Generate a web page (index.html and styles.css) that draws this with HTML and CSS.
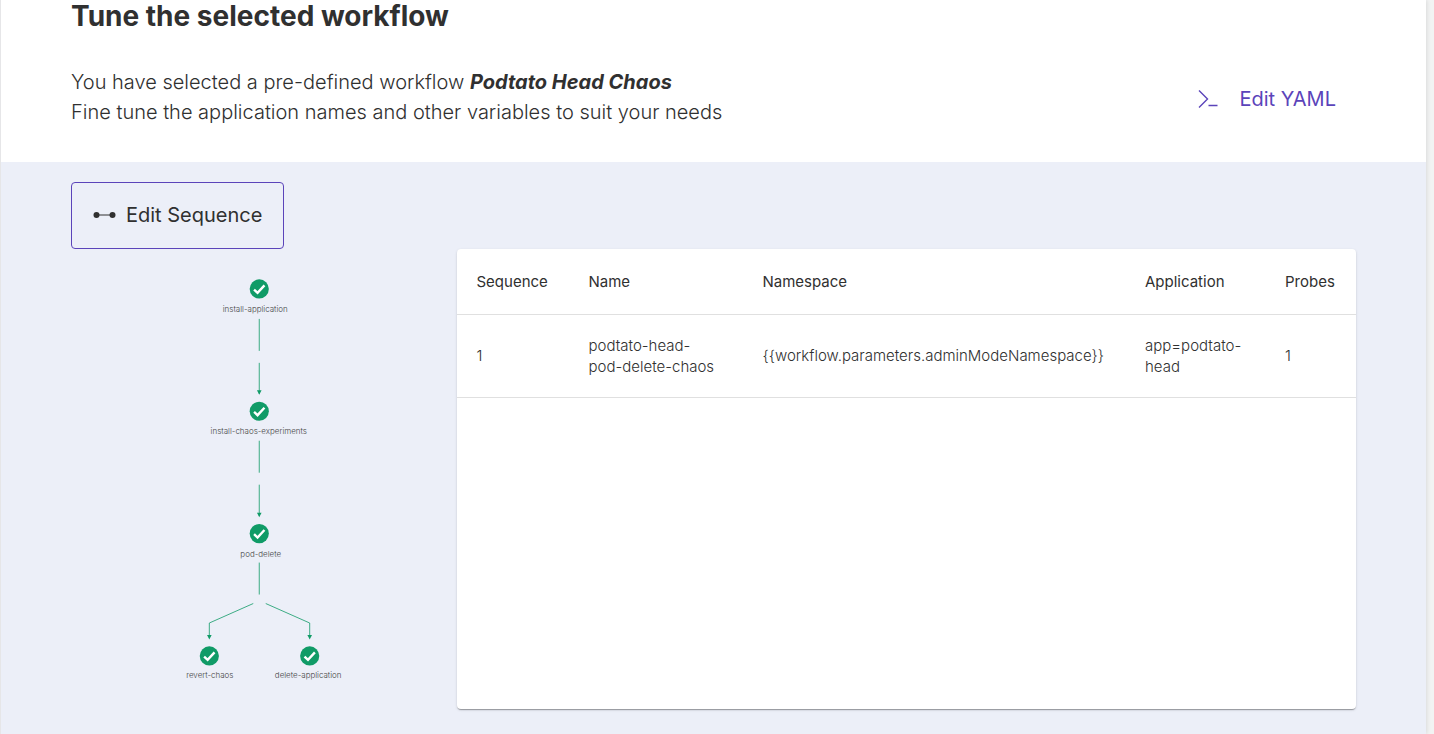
FILE: index.html
```html
<!DOCTYPE html>
<html lang="en">
<head>
<meta charset="utf-8">
<title>Tune the selected workflow</title>
<link rel="stylesheet" href="styles.css">
</head>
<body>
<main class="page">
  <header class="intro">
    <h1 class="title">Tune the selected workflow</h1>
    <div class="intro-row">
      <p class="description">You have selected a pre-defined workflow <strong class="workflow-name">Podtato Head Chaos</strong><br>Fine tune the application names and other variables to suit your needs</p>
      <button class="yaml-button" type="button">
        <svg class="yaml-icon" viewBox="0 0 20 20" aria-hidden="true"><path d="M1 1.500 9.500 10 1 18.500M10.500 16.500H19.500"/></svg>
        <span>Edit YAML</span>
      </button>
    </div>
  </header>
  <section class="workspace">
    <button class="sequence-button" type="button">
      <svg class="sequence-icon" viewBox="0 0 23 8" aria-hidden="true"><path d="M3 4h17"/><circle cx="3.500" cy="4" r="3"/><circle cx="19.500" cy="4" r="3"/></svg>
      <span>Edit Sequence</span>
    </button>
    <div class="columns">
      <svg class="graph" viewBox="0 0 386 460" role="img" aria-label="Workflow graph">
        <defs>
          <g id="done">
            <circle class="node" r="9.600"/>
            <path class="tick" d="M-5.200 .6-1.700 3.900 5.200-3.600"/>
          </g>
          <path id="arrow" class="arrow" d="M-2.300-4.500H2.300L0 0Z"/>
        </defs>
        <g class="edges">
          <path d="M188.500 70v32M188.500 114v31M188.500 192v32M188.500 236v31M188.500 314v32"/>
          <path d="M182.500 355 138.500 374.500V389M195 355 239 374.500V389"/>
        </g>
        <use href="#arrow" x="188.500" y="146"/>
        <use href="#arrow" x="188.500" y="268.500"/>
        <use href="#arrow" x="138.500" y="391"/>
        <use href="#arrow" x="239" y="391"/>
        <use href="#done" x="188.500" y="40"/>
        <use href="#done" x="188.500" y="162.500"/>
        <use href="#done" x="188.500" y="285"/>
        <use href="#done" x="138.500" y="407.500"/>
        <use href="#done" x="239" y="407.500"/>
        <g class="labels">
          <text x="184.500" y="63">install-application</text>
          <text x="188" y="185">install-chaos-experiments</text>
          <text x="190" y="308">pod-delete</text>
          <text x="139" y="430">revert-chaos</text>
          <text x="237.500" y="430">delete-application</text>
        </g>
      </svg>
      <div class="card">
        <table class="table">
          <colgroup><col class="col-sequence"><col class="col-name"><col><col class="col-application"><col class="col-probes"></colgroup>
          <thead>
            <tr><th scope="col">Sequence</th><th scope="col">Name</th><th scope="col">Namespace</th><th scope="col">Application</th><th scope="col">Probes</th></tr>
          </thead>
          <tbody>
            <tr><td>1</td><td>podtato-head-<wbr>pod-delete-chaos</td><td>{{workflow.parameters.adminModeNamespace}}</td><td>app=podtato-head</td><td>1</td></tr>
          </tbody>
        </table>
      </div>
    </div>
  </section>
</main>
</body>
</html>
```
FILE: styles.css
```css
* {
  box-sizing: border-box;
}

body {
  margin: 0;
  background: #f2f3f3;
  color: #303030;
  font-family: Inter, "Liberation Sans", sans-serif;
  font-weight: 300;
}

button {
  font: inherit;
  cursor: pointer;
}

.page {
  display: flex;
  flex-direction: column;
  min-height: 100vh;
  margin-right: 8px;
  border-left: 1px solid #e6e6e8;
  background: #fff;
  box-shadow: 1px 0 4px rgba(0, 0, 0, 0.1);
}

.intro {
  padding: 0 70px 35px;
}

.title {
  margin: 0 0 35px;
  font-size: 28px;
  font-weight: 700;
  line-height: 32px;
}

.intro-row {
  display: flex;
  align-items: center;
  justify-content: space-between;
}

.description {
  margin: 0;
  font-size: 20px;
  line-height: 30px;
}

.workflow-name {
  font-style: italic;
  font-weight: 700;
}

.yaml-button {
  display: flex;
  align-items: center;
  gap: 21px;
  padding: 4px 20px 0;
  border: 0;
  background: none;
  color: #5b44ba;
  font-size: 20px;
  font-weight: 400;
}

.yaml-icon {
  width: 20px;
  height: 20px;
  fill: none;
  stroke: currentColor;
  stroke-width: 1.4;
}

.workspace {
  flex: 1;
  display: flex;
  flex-direction: column;
  align-items: flex-start;
  padding: 20px 70px 25px;
  background: #eceff8;
}

.sequence-button {
  display: flex;
  align-items: center;
  gap: 10px;
  height: 67px;
  padding: 0 21px 2px;
  border: 1px solid #5b44ba;
  border-radius: 4px;
  background: none;
  color: #303030;
  font-size: 20px;
  font-weight: 400;
}

.sequence-icon {
  width: 23px;
  height: 8px;
  fill: currentColor;
  stroke: currentColor;
  stroke-width: 1;
}

.sequence-icon circle {
  stroke: none;
}

.columns {
  flex: 1;
  display: grid;
  grid-template-columns: 3fr 7fr;
  width: 100%;
}

.graph {
  width: 100%;
}

.node {
  fill: #109b67;
}

.tick {
  fill: none;
  stroke: #fff;
  stroke-width: 2.4;
}

.edges {
  fill: none;
  stroke: #109b67;
  stroke-width: 0.8;
}

.arrow {
  fill: #109b67;
}

.labels {
  fill: #444;
  font-size: 8px;
  font-weight: 300;
  text-anchor: middle;
}

.card {
  border-radius: 4px;
  background: #fff;
  box-shadow: 0 2px 1px -1px rgba(0, 0, 0, 0.2), 0 1px 1px rgba(0, 0, 0, 0.14), 0 1px 3px rgba(0, 0, 0, 0.12);
}

.table {
  width: 100%;
  border-collapse: collapse;
  table-layout: fixed;
  font-size: 15px;
  line-height: 21px;
}

.col-sequence {
  width: 112px;
}

.col-name {
  width: 174px;
}

.col-application {
  width: 140px;
}

.col-probes {
  width: 91px;
}

.table th,
.table td {
  padding: 20px;
  border-bottom: 1px solid #e0e0e0;
  text-align: left;
}

.table th {
  height: 65px;
  font-weight: 400;
}
```
